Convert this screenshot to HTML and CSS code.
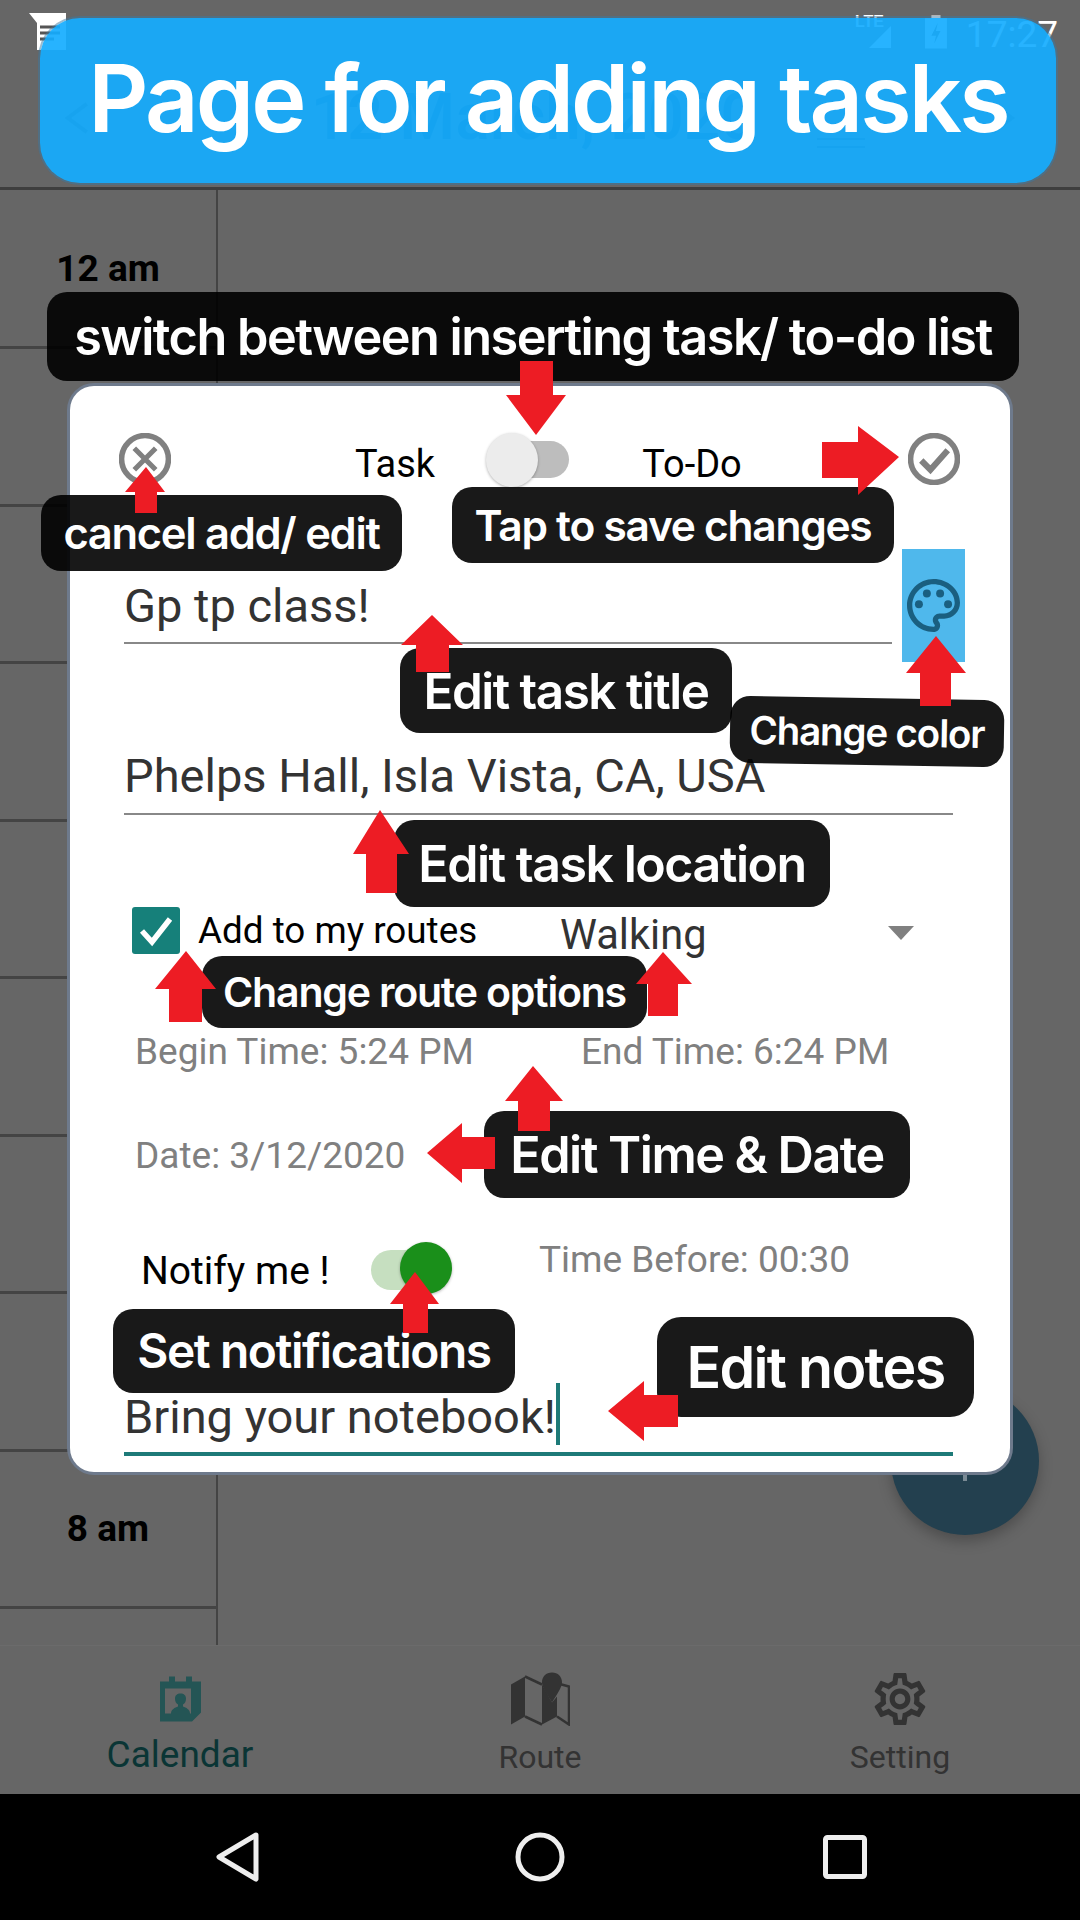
FILE: index.html
```html
<!DOCTYPE html>
<html lang="en">
<head>
  <meta charset="UTF-8" />
  <meta name="viewport" content="width=device-width, initial-scale=1.0"/>
  <title>Page for adding tasks</title>
  <link rel="stylesheet" href="styles.css">
</head>
<body>
  <div class="screen">
    <!-- app behind the dialog -->
    <header class="top">
      <div class="status">
        <svg class="note-icon" width="40" height="40" viewBox="0 0 40 40">
          <polygon fill="#fff" points="0,0 37,0 37,37 8,37 8,10"/>
          <path d="M11 14h20M11 20h20M11 26h14" stroke="#555" stroke-width="3"/>
        </svg>
        <span class="lte">LTE</span>
        <svg class="signal" width="24" height="24" viewBox="0 0 24 24"><polygon fill="#fff" points="24,0 24,24 0,24"/></svg>
        <svg class="battery" width="24" height="36" viewBox="0 0 24 36">
          <path fill="#fff" d="M7 0h10v3h7v33H0V3h7z"/>
          <path fill="#666" d="M14 8l-7 14h5l-2 9 7-14h-5z"/>
        </svg>
        <span class="clock">17:27</span>
      </div>
      <div class="date-bar">
        <svg class="chev" width="44" height="44" viewBox="0 0 44 44"><path d="M34 4L10 22l24 18" fill="none" stroke="#3a3a3a" stroke-width="5"/></svg>
        <span class="date-title">12 March, 2020</span>
        <svg class="date-lines" width="62" height="14" viewBox="0 0 62 14"><path d="M0 2h62M0 12h62" stroke="#123" stroke-width="2"/></svg>
        <svg class="chev" width="44" height="44" viewBox="0 0 44 44"><path d="M10 4l24 18-24 18" fill="none" stroke="#3a3a3a" stroke-width="5"/></svg>
      </div>
    </header>

    <main class="calendar">
      <div class="hours">
        <div class="hour"><b>12 am</b></div>
        <div class="hour"></div>
        <div class="hour"></div>
        <div class="hour"></div>
        <div class="hour"></div>
        <div class="hour"></div>
        <div class="hour"></div>
        <div class="hour"></div>
        <div class="hour"><b>8 am</b></div>
        <div class="hour hour-cut"></div>
      </div>
    </main>

    <div class="fab"></div>

    <nav class="tabs">
      <div class="tab tab-on">
        <svg width="41" height="45" viewBox="0 0 41 45">
          <path fill="#245555" fill-rule="evenodd" d="M9 0h6v5h11V0h6v5h9v31l-9 9H0V5h9zM5 12v25h6c0-4 4-6 7-7v-2c-2-1-3-3-3-6 0-3 2-5 5.500-5s5.500 2 5.500 5c0 3-1 5-3 6v2c3 1 7 3 7 7h1V12z"/>
        </svg>
        <span class="tab-label">Calendar</span>
      </div>
      <div class="tab">
        <svg width="59" height="53" viewBox="0 0 59 53">
          <polygon fill="#333" points="0,12 14,4 14,44 0,52"/>
          <path d="M14 4l17 8M14 44l17 8" stroke="#333" stroke-width="2.500" fill="none"/>
          <polygon fill="#333" points="31,12 41,30 46,24 46,44 31,52"/>
          <path d="M47 11l11 3v38l-12-8" stroke="#333" stroke-width="2.500" fill="none"/>
          <path fill="#333" d="M41 0c6 0 10 4 10 10 0 5-6 13-10 20-4-7-10-15-10-20 0-6 4-10 10-10z"/>
        </svg>
        <span class="tab-label">Route</span>
      </div>
      <div class="tab">
        <svg width="52" height="52" viewBox="2 2 20 20">
          <path fill="#333" d="M19.430 12.980c.04-.32.07-.64.07-.98 0-.34-.03-.66-.07-.98l2.110-1.650c.19-.15.24-.42.12-.64l-2-3.460c-.09-.16-.26-.25-.44-.25-.06 0-.12.01-.17.03l-2.490 1c-.52-.4-1.080-.73-1.690-.98l-.38-2.650C14.460 2.180 14.250 2 14 2h-4c-.25 0-.46.18-.49.42l-.38 2.650c-.61.25-1.170.59-1.690.98l-2.490-1c-.06-.02-.12-.03-.18-.03-.17 0-.34.09-.43.25l-2 3.460c-.13.22-.07.49.12.64l2.110 1.650c-.04.32-.07.65-.07.98 0 .33.03.66.07.98l-2.110 1.650c-.19.15-.24.42-.12.64l2 3.460c.09.16.26.25.44.25.06 0 .12-.01.17-.03l2.490-1c.52.4 1.080.73 1.690.98l.38 2.650c.03.24.24.42.49.42h4c.25 0 .46-.18.49-.42l.38-2.650c.61-.25 1.170-.59 1.690-.98l2.490 1c.06.02.12.03.18.03.17 0 .34-.09.43-.25l2-3.460c.12-.22.07-.49-.12-.64l-2.110-1.650zm-1.980-1.710c.04.31.05.52.05.73 0 .21-.02.43-.05.73l-.14 1.130.89.7 1.080.84-.7 1.210-1.270-.51-1.040-.42-.9.68c-.43.32-.84.56-1.250.73l-1.060.43-.16 1.130-.2 1.350h-1.400l-.19-1.350-.16-1.130-1.060-.43c-.43-.18-.83-.41-1.230-.71l-.91-.7-1.060.43-1.270.51-.7-1.210 1.080-.84.89-.7-.14-1.130c-.03-.31-.05-.54-.05-.74s.02-.43.05-.73l.14-1.130-.89-.7-1.080-.84.7-1.210 1.270.51 1.040.42.9-.68c.43-.32.84-.56 1.250-.73l1.060-.43.16-1.130.2-1.350h1.390l.19 1.350.16 1.130 1.060.43c.43.18.83.41 1.230.71l.91.7 1.060-.43 1.270-.51.7 1.210-1.070.85-.89.7.14 1.130zM12 8c-2.210 0-4 1.790-4 4s1.790 4 4 4 4-1.790 4-4-1.790-4-4-4zm0 6c-1.100 0-2-.9-2-2s.9-2 2-2 2 .9 2 2-.9 2-2 2z"/>
        </svg>
        <span class="tab-label">Setting</span>
      </div>
    </nav>

    <div class="sysbar">
      <svg width="46" height="54" viewBox="0 0 46 54"><path d="M42 5L5 27l37 22z" fill="none" stroke="#eee" stroke-width="5" stroke-linejoin="round"/></svg>
      <svg width="54" height="54" viewBox="0 0 54 54"><circle cx="27" cy="27" r="22" fill="none" stroke="#eee" stroke-width="5"/></svg>
      <svg width="44" height="44" viewBox="0 0 44 44"><rect x="2.500" y="2.500" width="39" height="39" rx="2" fill="none" stroke="#eee" stroke-width="5"/></svg>
    </div>

    <!-- add task dialog -->
    <section class="dialog">
      <div class="row-top">
        <svg class="round-icon" width="52" height="52" viewBox="0 0 51 51">
          <circle cx="25.500" cy="25.500" r="23" fill="none" stroke="#808080" stroke-width="5.500"/>
          <path d="M15 15l21 21M36 15L15 36" stroke="#808080" stroke-width="5"/>
        </svg>
        <span class="mode mode-task">Task</span>
        <div class="toggle"><span class="toggle-track"></span><span class="toggle-thumb"></span></div>
        <span class="mode mode-todo">To-Do</span>
        <svg class="round-icon save-icon" width="52" height="52" viewBox="0 0 51 51">
          <circle cx="25.500" cy="25.500" r="23" fill="none" stroke="#808080" stroke-width="5.500"/>
          <path d="M13 27l9 9 17-19" fill="none" stroke="#808080" stroke-width="6"/>
        </svg>
      </div>

      <div class="row-title">
        <div class="field field-title">Gp tp class!</div>
        <div class="color-box">
          <svg width="53" height="53" viewBox="2 2 20 20" fill="#1a5f80">
            <path d="M12 22C6.490 22 2 17.510 2 12S6.490 2 12 2s10 4.040 10 9c0 3.310-2.690 6-6 6h-1.770c-.28 0-.5.22-.5.5 0 .12.05.23.13.33.41.47.64 1.060.64 1.670 0 1.380-1.120 2.500-2.500 2.500zm0-18c-4.410 0-8 3.590-8 8s3.590 8 8 8c.28 0 .5-.22.5-.5 0-.16-.08-.28-.14-.35-.41-.46-.63-1.050-.63-1.650 0-1.380 1.120-2.500 2.500-2.500H16c2.210 0 4-1.790 4-4 0-3.860-3.590-7-8-7z"/>
            <circle cx="6.500" cy="11.500" r="1.500"/><circle cx="9.500" cy="7.500" r="1.500"/><circle cx="14.500" cy="7.500" r="1.500"/><circle cx="17.500" cy="11.500" r="1.500"/>
          </svg>
        </div>
      </div>

      <div class="field field-location">Phelps Hall, Isla Vista, CA, USA</div>

      <div class="row-route">
        <span class="checkbox">
          <svg width="48" height="47" viewBox="0 0 48 47"><path d="M10 24l10 11 18-23" fill="none" stroke="#fff" stroke-width="5.500"/></svg>
        </span>
        <span class="route-label">Add to my routes</span>
        <span class="route-mode">Walking</span>
        <span class="drop"></span>
      </div>

      <div class="row-times">
        <span class="time begin">Begin Time: 5:24 PM</span>
        <span class="time">End Time: 6:24 PM</span>
      </div>
      <div class="row-date"><span class="time">Date: 3/12/2020</span></div>

      <div class="row-notify">
        <span class="notify-label">Notify me !</span>
        <div class="switch"><span class="switch-track"></span><span class="switch-thumb"></span></div>
        <span class="time time-before">Time Before: 00:30</span>
      </div>

      <div class="field field-notes">Bring your notebook!<span class="caret"></span></div>
    </section>

    <!-- tutorial notes over the screenshot -->
    <div class="tip tip-switch">switch between inserting task/ to-do list</div>
    <div class="tip tip-cancel">cancel add/ edit</div>
    <div class="tip tip-save">Tap to save changes</div>
    <div class="tip tip-title">Edit task title</div>
    <div class="tip tip-color">Change color</div>
    <div class="tip tip-location">Edit task location</div>
    <div class="tip tip-route">Change route options</div>
    <div class="tip tip-time">Edit Time &amp; Date</div>
    <div class="tip tip-notify">Set notifications</div>
    <div class="tip tip-notes">Edit notes</div>

    <svg class="arrows" width="1080" height="1920" viewBox="0 0 1080 1920">
      <polygon points="536,435 506,395 520,395 520,361 553,361 553,395 566,395"/>
      <polygon points="899,457 858,426 858,442 822,442 822,478 858,478 858,495"/>
      <polygon points="146,467 165,492 157,492 157,513 135,513 135,492 125,492"/>
      <polygon points="432,615 463,645 449,645 449,672 416,672 416,645 401,645"/>
      <polygon points="936,636 966,673 951,673 951,706 920,706 920,673 906,673"/>
      <polygon points="380,810 409,854 397,854 397,893 366,893 366,854 353,854"/>
      <polygon points="186,951 216,989 202,989 202,1022 169,1022 169,989 155,989"/>
      <polygon points="663,952 692,984 678,984 678,1016 648,1016 648,984 636,984"/>
      <polygon points="533,1066 563,1101 550,1101 550,1131 518,1131 518,1101 505,1101"/>
      <polygon points="427,1153 462,1123 462,1137 495,1137 495,1169 462,1169 462,1183"/>
      <polygon points="415,1272 439,1304 428,1304 428,1333 403,1333 403,1304 390,1304"/>
      <polygon points="608,1411 644,1381 644,1395 678,1395 678,1427 644,1427 644,1441"/>
    </svg>

    <div class="banner">Page for adding tasks</div>
  </div>
</body>
</html>
```

FILE: styles.css
```css
* { box-sizing: border-box; }
body { margin: 0; background: #666; font-family: Roboto, sans-serif; }
.screen { position: relative; width: 1080px; height: 1920px; overflow: hidden; background: #666; display: flex; flex-direction: column; }

/* status + date header */
.top { height: 190px; border-bottom: 3px solid #3e3e3e; }
.status { height: 62px; display: flex; align-items: flex-start; padding: 13px 22px 0 29px; position: relative; }
.note-icon { flex: none; }
.lte { margin-left: 786px; margin-top: 0; font: 700 16px "Liberation Sans", sans-serif; color: #fff; }
.signal { margin: 12px 0 0 -15px; }
.battery { margin: 1px 0 0 34px; }
.clock { margin-left: 19px; margin-top: 1px; font-size: 37px; line-height: 42px; color: #fff; }
.date-bar { display: flex; align-items: center; padding: 16px 60px 0; }
.date-title { margin-left: 216px; font-size: 64px; line-height: 80px; color: #17384d; font-weight: 500; white-space: nowrap; }
.date-lines { margin: 50px 0 0 60px; }
.chev { margin-left: 120px; }
.chev:first-child { margin-left: 0; }

/* calendar grid */
.calendar { height: 1455px; }
.hours { width: 218px; height: 1455px; padding-top: 1.500px; border-right: 2px solid #444; overflow: hidden; }
.hour { height: 157.500px; border-bottom: 3px solid #444; display: flex; align-items: center; justify-content: center; font-size: 37px; color: #000; }
.hour-cut { border-bottom: 0; }

.fab { position: absolute; left: 891px; top: 1387px; width: 148px; height: 148px; border-radius: 50%; background: #23404f; box-shadow: 0 6px 14px rgba(0,0,0,.25); }
.fab::after { content: ""; position: absolute; left: 72px; top: 54px; width: 4px; height: 40px; background: #7a8a94; }

/* bottom tabs */
.tabs { height: 149px; border-top: 1px solid #6b6b6b; display: flex; }
.tab { flex: 1; display: flex; flex-direction: column; align-items: center; padding-top: 26px; }
.tab svg { display: block; height: 54px; }
.tab-label { margin-top: 10px; font-size: 32px; line-height: 42px; color: #333; }
.tab-on .tab-label { font-size: 37px; margin-top: 8px; color: #0a3535; }

.sysbar { height: 126px; background: #000; display: flex; align-items: center; padding-bottom: 0; }
.sysbar svg:nth-child(1) { margin-left: 214px; }
.sysbar svg:nth-child(2) { margin-left: 253px; }
.sysbar svg:nth-child(3) { margin-left: 256px; }

/* dialog */
.dialog { position: absolute; left: 70px; top: 386px; width: 940px; height: 1086px; background: #fff; border-radius: 24px; box-shadow: 0 0 0 3px #6e7a8c; color: #333; }
.row-top { margin-top: 47px; height: 50px; padding-left: 49px; display: flex; align-items: flex-start; }
.round-icon { flex: none; }
.mode { font-size: 38px; line-height: 50px; color: #000; margin-top: 6px; }
.mode-task { margin-left: 184px; }
.toggle { position: relative; width: 84px; height: 54px; margin-left: 50px; }
.toggle-track { position: absolute; left: 27px; top: 8px; width: 57px; height: 37px; border-radius: 19px; background: #bdbdbd; }
.toggle-thumb { position: absolute; left: 1px; top: 0; width: 52px; height: 54px; border-radius: 50%; background: #ececec; box-shadow: 0 1px 3px rgba(0,0,0,.3); }
.mode-todo { margin-left: 73px; }
.save-icon { margin-left: 166px; }

.field { font-size: 47px; line-height: 56px; color: #333; border-bottom: 2px solid #888; }
.row-title { margin-top: 66px; height: 113px; padding-left: 54px; display: flex; align-items: flex-start; }
.field-title { width: 768px; height: 95px; padding-top: 29px; }
.color-box { width: 63px; height: 113px; margin-left: 10px; background: #4fb8ec; padding: 30px 0 0 5px; }
.color-box svg { display: block; }
.field-location { width: 829px; margin: 86px 0 0 54px; padding-bottom: 9px; }

.row-route { margin-top: 92px; height: 47px; padding-left: 62px; display: flex; align-items: flex-start; }
.checkbox { flex: none; width: 48px; height: 47px; background: #16807a; border-radius: 3px; }
.checkbox svg { display: block; }
.route-label { margin-left: 18px; width: 362px; font-size: 36.800px; line-height: 48px; color: #000; }
.route-mode { width: 328px; font-size: 41.600px; line-height: 56px; color: #333; }
.drop { margin-top: 19px; width: 0; height: 0; border-left: 13px solid transparent; border-right: 13px solid transparent; border-top: 14px solid #808080; }

.time { font-size: 37px; line-height: 48px; color: #808080; }
.row-times { margin-top: 74px; padding-left: 65px; display: flex; }
.begin { width: 446px; }
.row-date { margin-top: 56px; padding-left: 65px; }

.row-notify { margin-top: 60px; height: 56px; padding-left: 71px; display: flex; align-items: flex-start; }
.notify-label { width: 230px; margin-top: 7px; font-size: 39px; line-height: 48px; color: #000; }
.switch { position: relative; width: 81px; height: 56px; }
.switch-track { position: absolute; left: 0; top: 10px; width: 70px; height: 40px; border-radius: 20px; background: #c6dfc0; }
.switch-thumb { position: absolute; left: 29px; top: 2px; width: 52px; height: 52px; border-radius: 50%; background: #1a8f1a; box-shadow: 0 1px 3px rgba(0,0,0,.3); }
.time-before { margin: -4px 0 0 87px; }

.field-notes { position: relative; width: 829px; margin: 93px 0 0 54px; padding-bottom: 7px; border-bottom: 4px solid #1d7a78; }
.caret { position: absolute; top: -6px; width: 4px; height: 62px; background: #1d7a78; }

/* tutorial notes */
.tip { position: absolute; display: flex; align-items: center; justify-content: center; background: rgba(0,0,0,.9); color: #fff; border-radius: 20px; font-family: Inter, sans-serif; font-weight: 600; letter-spacing: -.03em; white-space: nowrap; }
.tip-switch { left: 47px; top: 292px; width: 972px; height: 89px; font-size: 50.400px; }
.tip-cancel { left: 41px; top: 495px; width: 361px; height: 76px; font-size: 43.500px; }
.tip-save { left: 452px; top: 487px; width: 442px; height: 76px; font-size: 42.500px; }
.tip-title { left: 400px; top: 648px; width: 332px; height: 85px; font-size: 49.400px; }
.tip-color { left: 730px; top: 698px; width: 274px; height: 67px; font-size: 38.500px; transform: rotate(1deg); }
.tip-location { left: 394px; top: 820px; width: 436px; height: 87px; font-size: 50.100px; }
.tip-route { left: 202px; top: 956px; width: 445px; height: 72px; font-size: 41.100px; }
.tip-time { left: 484px; top: 1111px; width: 426px; height: 87px; font-size: 50.300px; }
.tip-notify { left: 113px; top: 1309px; width: 402px; height: 84px; font-size: 47.900px; }
.tip-notes { left: 657px; top: 1317px; width: 317px; height: 100px; font-size: 57.300px; border-radius: 24px; }

.arrows { position: absolute; left: 0; top: 0; fill: #ed1c24; pointer-events: none; }

.banner { position: absolute; left: 40px; top: 18px; width: 1016px; height: 165px; display: flex; align-items: center; justify-content: center; padding-bottom: 4px; background: rgba(21,172,255,.92); border-radius: 40px; box-shadow: 0 0 0 2px rgba(60,120,160,.5); color: #fff; font-family: Inter, sans-serif; font-weight: 600; letter-spacing: -.03em; font-size: 93.400px; white-space: nowrap; }
```
